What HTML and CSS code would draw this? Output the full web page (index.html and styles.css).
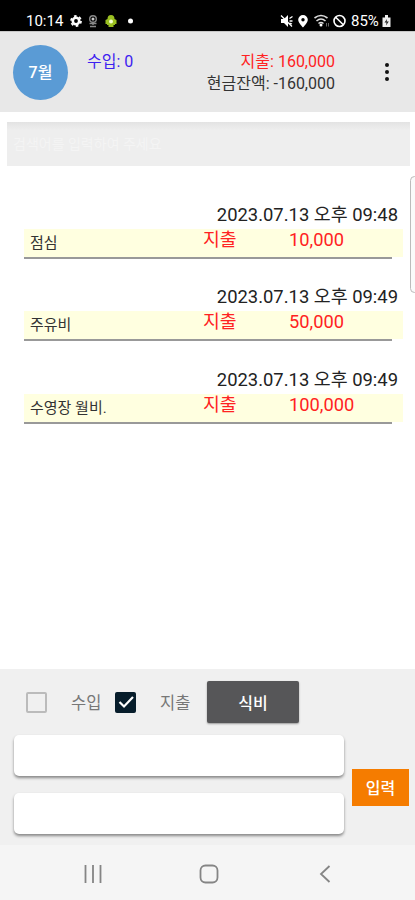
FILE: index.html
```html
<!DOCTYPE html>
<html lang="ko">
<head>
    <meta charset="UTF-8">
    <meta name="viewport" content="width=device-width, initial-scale=1.0">
    <title>가계부</title>
    <link rel="stylesheet" href="styles.css">
</head>
<body>
    <div class="status">
        <span class="clock">10:14</span>
        <svg class="status-left" width="66" height="14" viewBox="0 0 66 14">
            <circle cx="6" cy="7" r="3.2" fill="none" stroke="#fff" stroke-width="2.6"/>
            <circle cx="6" cy="7" r="5" fill="none" stroke="#fff" stroke-width="1.8" stroke-dasharray="2.6 2.636"/>
            <g fill="none" stroke="#888" stroke-width="1.4">
                <circle cx="23" cy="5" r="3.3"/>
                <path d="M23 8v3M19.500 9.500h7M20 12.500h6"/>
            </g>
            <circle cx="23" cy="5" r="1.500" fill="#ccc"/>
            <path d="M37.500 5a3.500 4 0 0 1 7 0l2 1v4h-1.500v1h-1.500v2h-5v-2H37v-1h-1.500V6z" fill="#9abf21"/>
            <circle cx="41" cy="7.500" r="2" fill="#f4ffd0"/>
            <circle cx="60.500" cy="7" r="2.500" fill="#fff"/>
        </svg>
        <svg class="status-right" width="68" height="14" viewBox="0 0 68 14">
            <path d="M1 5h3l4-4v12L4 9H1z" fill="#fff"/>
            <path d="M1 1.500l11 11M9.500 4.500l3-2M9.500 7h3M9.500 9l2.500 1" stroke="#fff" stroke-width="1.300"/>
            <path d="M23 1a4.800 4.800 0 0 1 4.800 4.800C27.800 9 23 13.500 23 13.500S18.200 9 18.200 5.800A4.800 4.800 0 0 1 23 1z" fill="#fff"/>
            <circle cx="23" cy="5.800" r="1.700" fill="#000"/>
            <g fill="none" stroke="#ddd" stroke-width="1.600">
                <path d="M34.500 4q6.500-5 13 0M36.500 7q4.500-4 9 0M38.500 9.500q2.500-2 5 0"/>
                <path d="M46.500 9v3.500M48.500 9v3.500" stroke="#666" stroke-width="1"/>
            </g>
            <circle cx="41" cy="11" r="1.500" fill="#fff"/>
            <circle cx="59.500" cy="7" r="5.500" fill="none" stroke="#fff" stroke-width="1.600"/>
            <path d="M55.700 3.200l7.600 7.600" stroke="#fff" stroke-width="1.600"/>
        </svg>
        <span class="battery">85%</span>
        <svg width="9" height="12" viewBox="0 0 9 12">
            <path d="M3 0h3v2.500h2.500V12h-8V2.500H3z" fill="#eee"/>
            <path d="M5 4L2.500 7.500h2L4 10.500 6.800 6.500H4.700z" fill="#222"/>
        </svg>
    </div>

    <div class="header">
        <div class="month">7월</div>
        <div class="income">수입: 0</div>
        <div class="totals">
            <div class="expense">지출: 160,000</div>
            <div class="balance">현금잔액: -160,000</div>
        </div>
        <div class="menu"><i></i><i></i><i></i></div>
    </div>

    <div class="content">
        <div class="search">검색어를 입력하여 주세요</div>
        <div class="list">
            <div class="item">
                <div class="date">2023.07.13 오후 09:48</div>
                <div class="row">
                    <span class="name">점심</span>
                    <span class="type">지출</span>
                    <span class="amount">10,000</span>
                </div>
                <div class="line"></div>
            </div>
            <div class="item">
                <div class="date">2023.07.13 오후 09:49</div>
                <div class="row">
                    <span class="name">주유비</span>
                    <span class="type">지출</span>
                    <span class="amount">50,000</span>
                </div>
                <div class="line"></div>
            </div>
            <div class="item">
                <div class="date">2023.07.13 오후 09:49</div>
                <div class="row">
                    <span class="name">수영장 월비.</span>
                    <span class="type">지출</span>
                    <span class="amount">100,000</span>
                </div>
                <div class="line"></div>
            </div>
        </div>
        <div class="edge-handle"></div>
    </div>

    <div class="form">
        <div class="options">
            <span class="check"></span>
            <span class="check-label">수입</span>
            <span class="check checked">
                <svg width="20" height="20" viewBox="0 0 20 20"><path d="M3.500 10l4.500 4.500L17 5" fill="none" stroke="#fff" stroke-width="2.200"/></svg>
            </span>
            <span class="check-label">지출</span>
            <button class="category">식비</button>
        </div>
        <div class="inputs">
            <div class="fields">
                <input type="text">
                <input type="text">
            </div>
            <button class="submit">입력</button>
        </div>
    </div>

    <div class="nav">
        <svg width="18" height="18" viewBox="0 0 18 18"><path d="M1.500 0v18M9 0v18M16.500 0v18" stroke="#858585" stroke-width="1.800"/></svg>
        <svg width="20" height="20" viewBox="0 0 20 20"><rect x="1.500" y="1.500" width="17" height="17" rx="5" fill="none" stroke="#858585" stroke-width="1.800"/></svg>
        <svg class="back" width="12" height="18" viewBox="0 0 12 18"><path d="M10.500 1L2 9l8.500 8" fill="none" stroke="#858585" stroke-width="1.800"/></svg>
    </div>
</body>
</html>
```
FILE: styles.css
```css
* {
    box-sizing: border-box;
}

body {
    margin: 0;
    width: 415px;
    height: 900px;
    display: flex;
    flex-direction: column;
    overflow: hidden;
    background: #fff;
    font-family: Roboto, "Noto Sans CJK KR", sans-serif;
    color: #333;
}

button {
    border: none;
    padding: 0;
    font-family: inherit;
    color: #fff;
}

.status {
    height: 31px;
    padding: 10px 24px 0 26px;
    display: flex;
    align-items: center;
    background: #000;
    color: #fff;
    font-size: 15px;
    line-height: 20px;
}

.clock {
    width: 38px;
}

.status-left {
    margin-left: 6px;
}

.status-right {
    margin-left: auto;
    margin-right: 3px;
}

.battery {
    width: 29px;
    font-size: 15px;
    margin-right: 2px;
}

.header {
    height: 81px;
    padding: 13px 24px 0 13px;
    display: flex;
    align-items: flex-start;
    background: #e8e8e8;
    border-top: 1px solid #c8c8c8;
    font-size: 16px;
    line-height: 22px;
}

.month {
    width: 55px;
    height: 55px;
    border-radius: 50%;
    background: #5a9bd5;
    color: #fff;
    text-align: center;
    line-height: 55px;
    font-weight: 500;
}

.income {
    margin: 6px 0 0 19px;
    color: #3d22f0;
}

.totals {
    margin: 6px 47px 0 auto;
    text-align: right;
}

.expense {
    color: #ff2222;
}

.menu {
    margin-top: 18px;
    width: 9px;
    display: flex;
    flex-direction: column;
    align-items: center;
    gap: 3px;
}

.menu i {
    width: 4px;
    height: 4px;
    border-radius: 50%;
    background: #111;
}

.content {
    position: relative;
    height: 557px;
    padding: 10px 5px 0 7px;
}

.search {
    height: 44px;
    padding-left: 6px;
    background: linear-gradient(#e3e3e3, #eeeeee 8px);
    color: #f4f4f4;
    font-size: 14px;
    line-height: 44px;
}

.list {
    padding: 37px 7px 0 17px;
}

.item {
    height: 82.3px;
}

.date {
    height: 26px;
    padding-right: 5px;
    text-align: right;
    font-size: 18.4px;
    line-height: 24px;
    color: #222;
}

.row {
    height: 28px;
    display: grid;
    grid-template-columns: 173px 86px 1fr;
    padding-left: 6px;
    background: #ffffe0;
}

.type, .amount {
    font-size: 18.3px;
    line-height: 22px;
    color: #f22;
}

.name {
    font-size: 15px;
    line-height: 29px;
}

.line {
    width: 368px;
    height: 2px;
    background: #999;
}

.edge-handle {
    position: absolute;
    top: 64px;
    right: -4px;
    width: 9px;
    height: 117px;
    border: 1px solid #bbb;
    border-radius: 5px;
    background: #fafafa;
}

.form {
    height: 176px;
    padding: 11px 6px 0 14px;
    background: #f0f0f0;
}

.options {
    height: 44px;
    display: flex;
    align-items: center;
    font-size: 16.5px;
    color: #777;
}

.check {
    width: 21px;
    height: 21px;
    margin-left: 12px;
    border: 2px solid #bbb;
    border-radius: 2px;
}

.check.checked {
    display: flex;
    align-items: center;
    justify-content: center;
    border: none;
    background: #071d2b;
}

.check-label {
    width: 32px;
    margin-left: 24px;
}

.category {
    width: 92px;
    height: 42px;
    margin-left: 15px;
    border-radius: 2px;
    background: #565658;
    box-shadow: 0 1px 2px #999;
    font-size: 16px;
    font-weight: 500;
}

.inputs {
    display: flex;
    align-items: center;
    margin-top: 11px;
}

.fields {
    width: 330px;
    display: flex;
    flex-direction: column;
    gap: 17px;
}

.fields input {
    width: 100%;
    height: 41px;
    border: none;
    border-radius: 5px;
    background: #fff;
    box-shadow: 0 2px 3px #888;
}

.submit {
    width: 57px;
    height: 37px;
    margin: 5px 0 0 8px;
    background: #f57c00;
    font-size: 16px;
    font-weight: 500;
}

.nav {
    height: 55px;
    padding: 3px 84px 0;
    display: flex;
    align-items: center;
    gap: 97px;
    background: #f5f5f5;
}

.back {
    margin-left: 3px;
}
```
